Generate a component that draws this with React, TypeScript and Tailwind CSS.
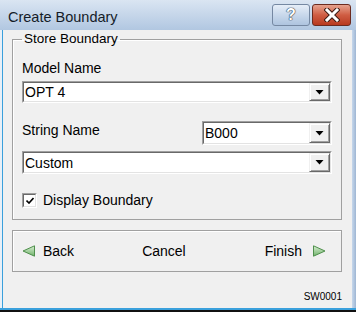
import React from 'react';

const font = { fontFamily: '"Liberation Sans", Arial, sans-serif' };

const ArrowBtn: React.FC = () => (
  <div className="w-[21px] h-full flex items-center justify-center bg-[#f0f0f0] border border-t-[#f0f0f0] border-l-[#f0f0f0] border-r-[#696969] border-b-[#696969] shadow-[inset_1px_1px_0_#ffffff,inset_-1px_-1px_0_#a0a0a0]">
    <svg width="9" height="5" viewBox="0 0 9 5">
      <path d="M0.5 0 H8.5 L4.5 4.5 Z" fill="#000" />
    </svg>
  </div>
);

const Combo: React.FC<{ value: string; className?: string }> = ({ value, className = '' }) => (
  <div
    className={`flex bg-white border border-t-[#a0a0a0] border-l-[#a0a0a0] border-r-white border-b-white ${className}`}
  >
    <div className="flex-1 flex items-stretch border border-t-[#696969] border-l-[#696969] border-r-[#e3e3e3] border-b-[#e3e3e3]">
      <span className="flex-1 self-center pl-[1px] text-[14px] leading-[16px] text-black">{value}</span>
      <ArrowBtn />
    </div>
  </div>
);

const GreenArrow: React.FC<{ dir: 'left' | 'right' }> = ({ dir }) => (
  <svg width="14" height="12" viewBox="0 0 14 12" className={dir === 'right' ? '-scale-x-100' : ''}>
    <defs>
      <linearGradient id={`g-${dir}`} x1="0" y1="0" x2="0" y2="1">
        <stop offset="0" stopColor="#d8eed2" />
        <stop offset="1" stopColor="#6fb26a" />
      </linearGradient>
    </defs>
    <path d="M1 6 L12.5 0.8 V11.2 Z" fill={`url(#g-${dir})`} stroke="#4f8f4c" strokeWidth="1" strokeLinejoin="round" />
  </svg>
);

const App: React.FC = () => {
  return (
    <div className="w-[356px] h-[312px] flex flex-col bg-[#bfd2e9] overflow-hidden" style={font}>
      {/* title bar */}
      <div className="h-[30px] flex items-start bg-gradient-to-b from-[#dae5f2] to-[#b1c7e1] pl-[8px] pr-[5px]">
        <span className="mt-[8px] text-[14.5px] leading-[18px] text-[#151c28]">Create Boundary</span>
        <div className="ml-auto mt-[4px] flex gap-[2px]">
          <div className="w-[38px] h-[22px] rounded-[3px] border border-[#7588a2] bg-gradient-to-b from-[#e6eef8] via-[#c8d8eb] to-[#aec4df] flex items-center justify-center">
            <span className="text-[16px] font-bold leading-none text-white [text-shadow:0_0_1px_#2c3a4c,0_0_1px_#2c3a4c,0_0_1px_#2c3a4c]">?</span>
          </div>
          <div className="w-[39px] h-[22px] rounded-[3px] border border-[#6b2b20] bg-gradient-to-b from-[#e5a28f] via-[#cf5d43] to-[#b8391f] flex items-center justify-center">
            <svg width="16" height="14" viewBox="0 0 16 14">
              <path d="M3 2 L13 12 M13 2 L3 12" stroke="#3a1a14" strokeWidth="5" strokeLinecap="square" />
              <path d="M3 2 L13 12 M13 2 L3 12" stroke="#ffffff" strokeWidth="3" strokeLinecap="square" />
            </svg>
          </div>
        </div>
      </div>

      {/* client area */}
      <div className="flex flex-1">
        <div className="w-[3px] border-l-2 border-[#e8f0f8] bg-[#3aa0dc]" />
        <div className="w-[349px] bg-[#f0f0f0] flex flex-col pl-[9px] pr-[9px]">
          <fieldset className="mt-[1px] w-[330px] h-[189px] border border-[#a0a0a0] shadow-[inset_1px_1px_0_#ffffff] px-[9px]">
            <legend className="px-[2px] text-[13.5px] leading-[16px] text-black">Store Boundary</legend>
            <div className="mt-[13px] text-[14px] leading-[16px] text-black">Model Name</div>
            <Combo value="OPT 4" className="mt-[5px] w-[310px] h-[22px]" />
            <div className="mt-[18px] w-[310px] flex items-start">
              <span className="mt-[1px] text-[14px] leading-[16px] text-black">String Name</span>
              <Combo value="B000" className="ml-auto w-[130px] h-[24px]" />
            </div>
            <Combo value="Custom" className="mt-[6px] w-[310px] h-[23px]" />
            <div className="mt-[18px] flex items-center gap-[6px]">
              <div className="w-[15px] h-[15px] bg-white border border-t-[#a0a0a0] border-l-[#a0a0a0] border-r-white border-b-white">
                <div className="w-full h-full border border-t-[#696969] border-l-[#696969] border-r-[#e3e3e3] border-b-[#e3e3e3] flex items-center justify-center">
                  <svg width="8" height="7" viewBox="0 0 8 7">
                    <path d="M0.5 3.5 L3 6 L7.5 1" stroke="#000" strokeWidth="1.6" fill="none" />
                  </svg>
                </div>
              </div>
              <span className="text-[14px] leading-[16px] text-black">Display Boundary</span>
            </div>
          </fieldset>

          <div className="mt-[10px] w-[330px] h-[42px] border border-[#a0a0a0] shadow-[inset_1px_1px_0_#ffffff] flex items-center pl-[9px] pr-[15px] text-[14px] text-black">
            <GreenArrow dir="left" />
            <span className="ml-[7px]">Back</span>
            <span className="ml-[68px]">Cancel</span>
            <span className="ml-auto">Finish</span>
            <span className="ml-[10px]">
              <GreenArrow dir="right" />
            </span>
          </div>

          <div className="mt-auto mb-[4px] text-right text-[10px] leading-[14px] text-black pr-[1px]">SW0001</div>
        </div>
        <div className="flex-1 bg-gradient-to-r from-[#c7d8ec] to-[#9fb6d3]" />
      </div>
      <div className="h-[2px] bg-[#3aa0dc]" />
      <div className="h-[2px] bg-[#111]" />
    </div>
  );
};

export default App;
